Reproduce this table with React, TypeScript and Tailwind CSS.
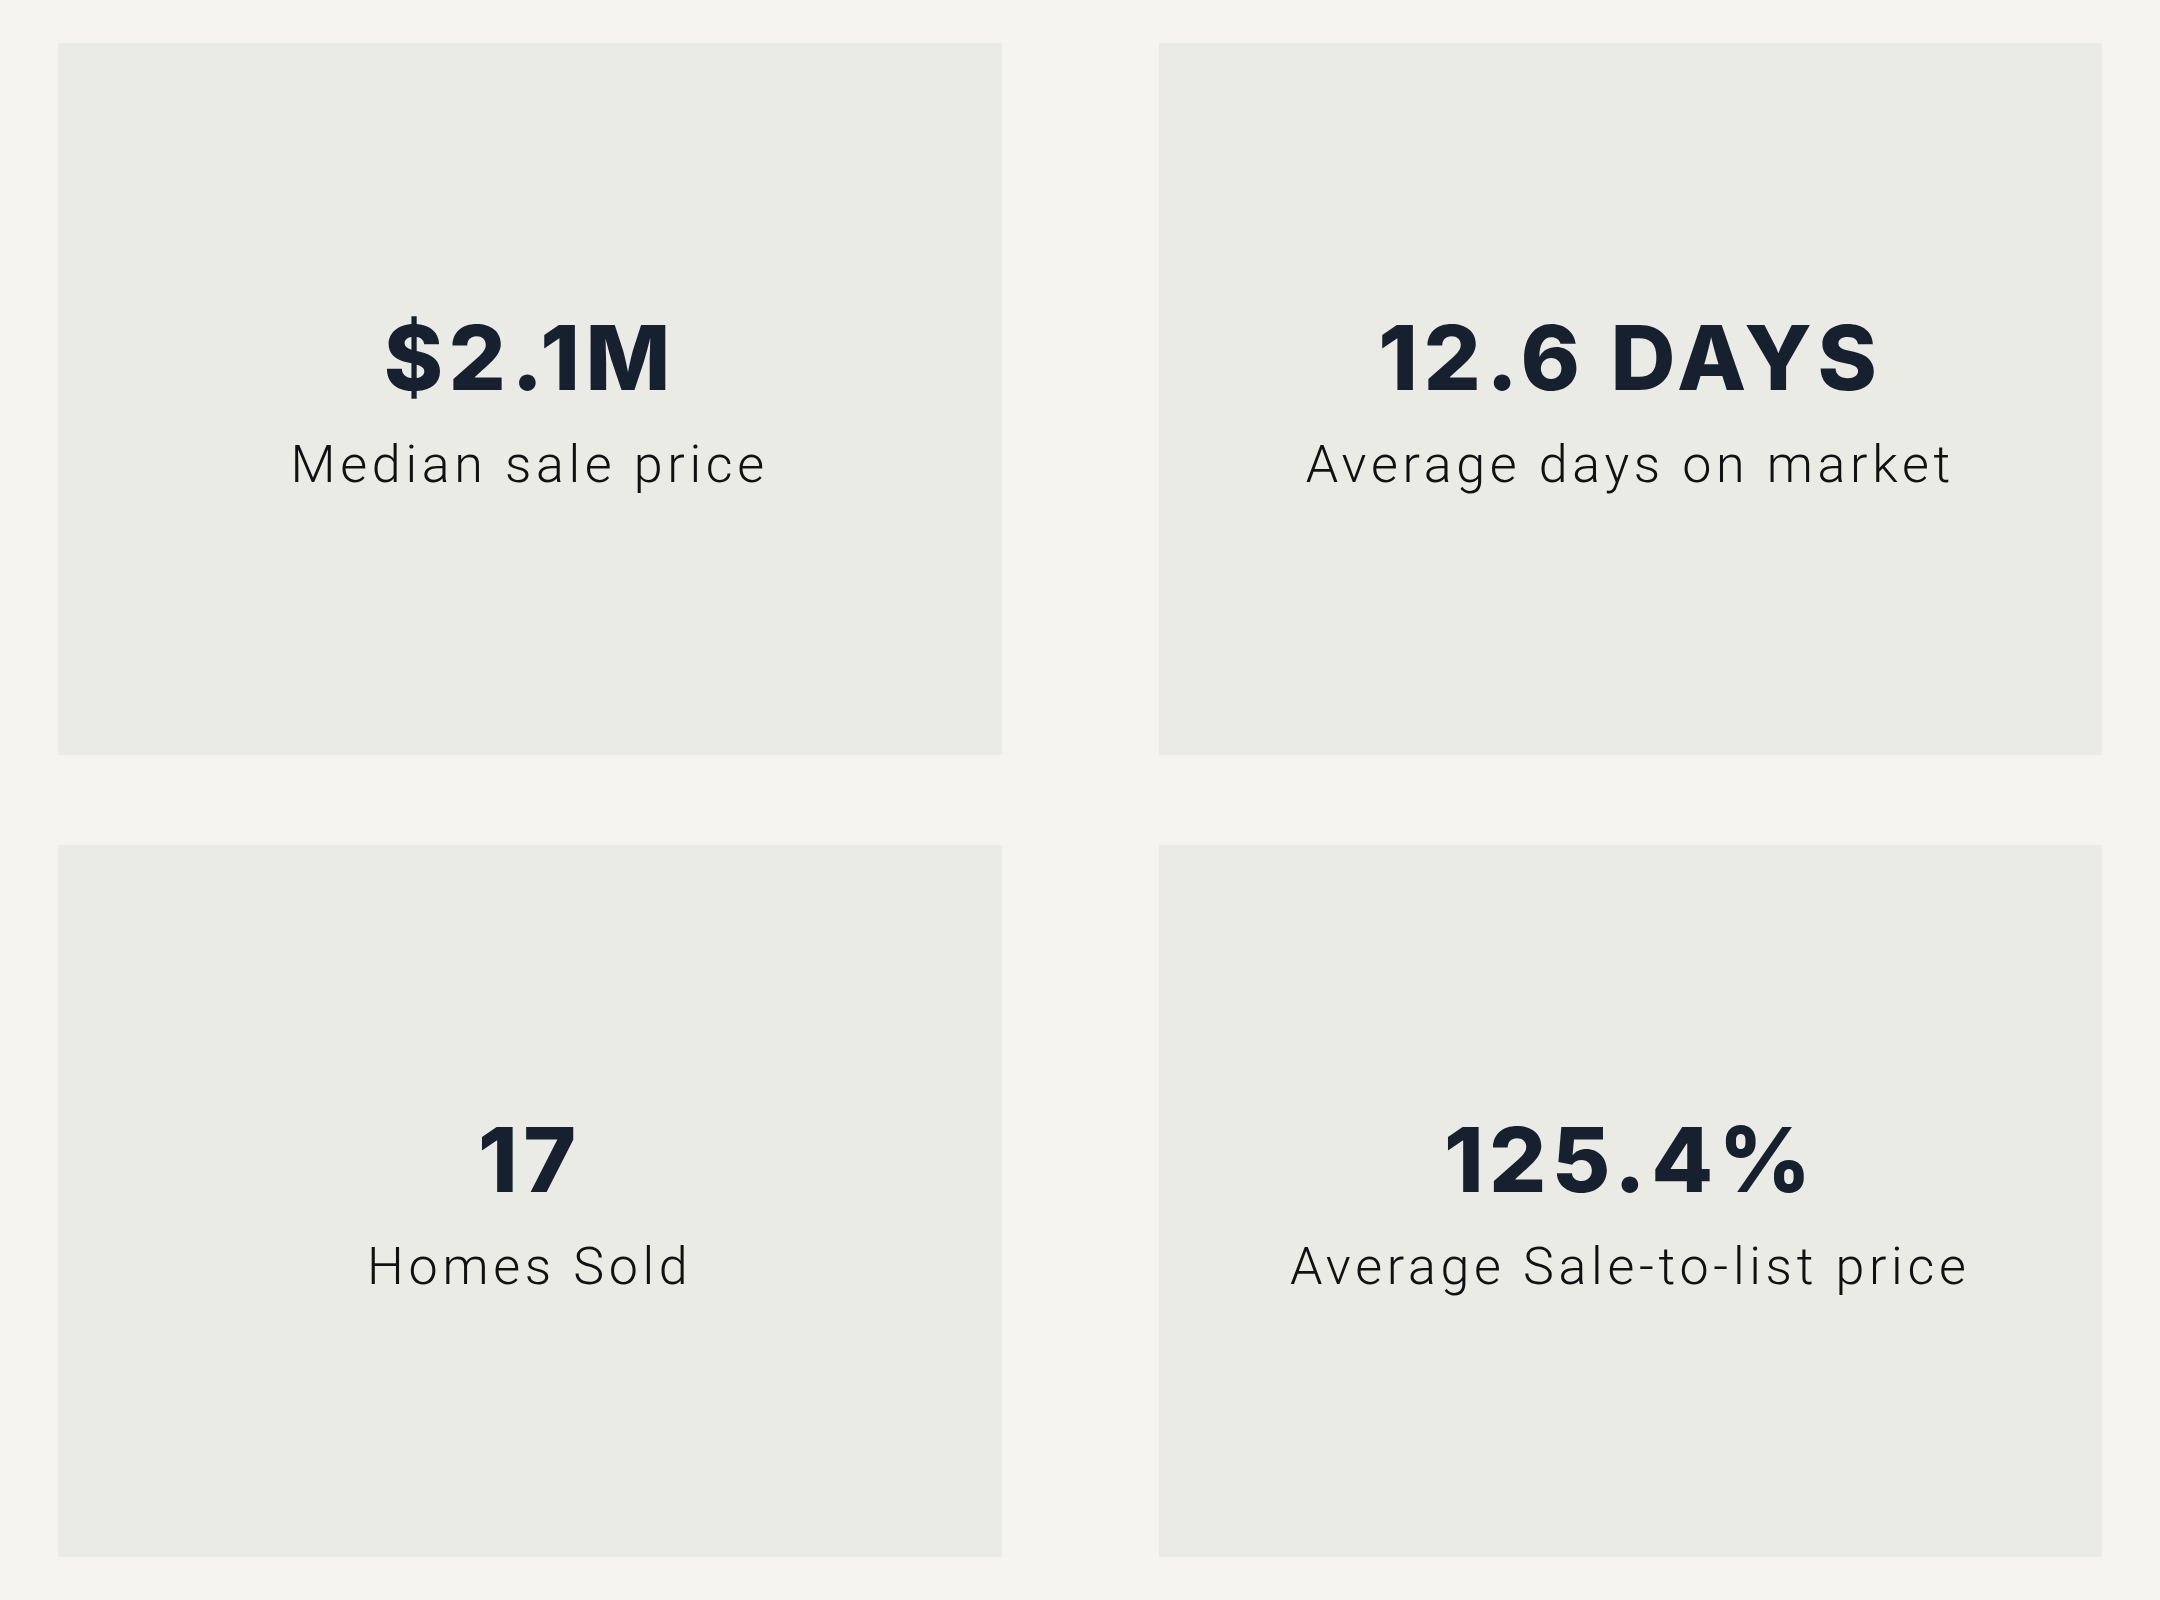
const stats = [
  { value: '$2.1M', label: 'Median sale price' },
  { value: '12.6 DAYS', label: 'Average days on market' },
  { value: '17', label: 'Homes Sold' },
  { value: '125.4%', label: 'Average Sale-to-list price' },
];

const StatCard = ({ value, label }: { value: string; label: string }) => (
  <div className="flex h-[712px] flex-col items-center justify-center bg-[#ebebe5] pt-[6px]">
    <div className="font-['Inter',sans-serif] text-[90px] font-extrabold leading-none tracking-[0.06em] text-[#16202e]">
      {value}
    </div>
    <div className="mt-[36px] font-['Roboto',sans-serif] text-[52px] font-light leading-none tracking-[0.09em] text-[#111111]">
      {label}
    </div>
  </div>
);

export default function App() {
  return (
    <div className="min-h-screen bg-[#f5f4ef] px-[58px] py-[43px]">
      <div className="grid grid-cols-2 gap-x-[157px] gap-y-[90px]">
        {stats.map(stat => (
          <StatCard key={stat.label} value={stat.value} label={stat.label} />
        ))}
      </div>
    </div>
  );
}
